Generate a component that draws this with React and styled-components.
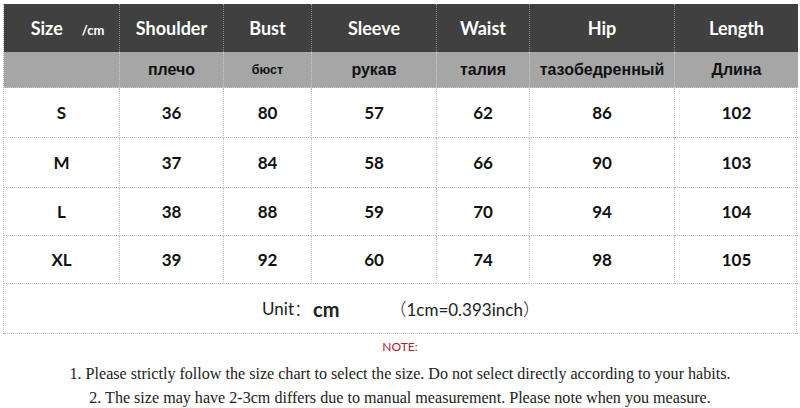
import React from "react";
import styled, { createGlobalStyle } from "styled-components";

const Global = createGlobalStyle`
  html, body { margin: 0; padding: 0; background: #fff; }
  body { width: 800px; height: 408px; overflow: hidden; }
`;

const Page = styled.div`
  padding: 4px 3px 0 3px;
  width: 800px;
  box-sizing: border-box;
`;

const Table = styled.div`
  display: grid;
  grid-template-columns: 115px 104px 88px 125px 93px 145px 124px;
  grid-template-rows: 48px 36px 50px 50px 48px 48px 50px;
  width: 794px;
  border-left: 1px dotted #bdbdbd;
  border-right: 1px dotted #bdbdbd;
  box-sizing: border-box;
`;

const HeadCell = styled.div`
  background: #404040;
  color: #fff;
  font-family: Lato, "Liberation Sans", sans-serif;
  font-weight: 700;
  font-size: 18px;
  display: flex;
  align-items: center;
  justify-content: center;
  border-left: ${(p) => (p.$first ? "none" : "1px dotted #8a8a8a")};
  padding-left: ${(p) => (p.$first ? "12px" : "0")};
  box-sizing: border-box;
`;

const Small = styled.span`
  font-size: 13px;
  margin-left: 19px;
  margin-top: 3px;
`;

const SubCell = styled.div`
  background: #a6a6a6;
  color: #111;
  font-family: "Liberation Sans", Arial, sans-serif;
  font-weight: 700;
  font-size: ${(p) => (p.$small ? "12.5px" : "16px")};
  display: flex;
  align-items: center;
  justify-content: center;
  border-left: ${(p) => (p.$first ? "none" : "1px dotted #c8c8c8")};
  border-bottom: 1px dotted #c8c8c8;
  box-sizing: border-box;
`;

const Cell = styled.div`
  color: #111;
  font-family: Lato, "Liberation Sans", sans-serif;
  font-weight: 700;
  font-size: 17px;
  display: flex;
  align-items: center;
  justify-content: center;
  border-left: ${(p) => (p.$first ? "none" : "1px dotted #c4c4c4")};
  border-bottom: 1px dotted #b8b8b8;
  box-sizing: border-box;
`;

const UnitRow = styled.div`
  grid-column: 1 / -1;
  display: flex;
  align-items: center;
  justify-content: center;
  font-family: Lato, "Liberation Sans", sans-serif;
  font-size: 17px;
  color: #222;
  border-bottom: 1px dotted #b8b8b8;
  box-sizing: border-box;
`;

const UnitBold = styled.span`
  font-weight: 700;
  font-size: 20px;
  margin-left: 2px;
`;

const Paren = styled.span`
  font-family: "Noto Sans CJK SC", sans-serif;
  font-weight: 300;
`;

const Conv = styled.span`
  margin-left: 50px;
`;

const Notes = styled.div`
  display: flex;
  flex-direction: column;
  align-items: center;
  padding-top: 6px;
`;

const NoteTitle = styled.div`
  color: #b8202e;
  font-family: Lato, "Liberation Sans", sans-serif;
  font-size: 12px;
  line-height: 14px;
  margin-bottom: 8px;
`;

const NoteLine = styled.div`
  font-family: "Liberation Serif", "Times New Roman", serif;
  font-size: 16.1px;
  line-height: 24px;
  color: #222;
  text-align: center;
  white-space: nowrap;
`;

const cols = ["Shoulder", "Bust", "Sleeve", "Waist", "Hip", "Length"];
const sub = [
  { t: "плечо" },
  { t: "бюст", small: true },
  { t: "рукав" },
  { t: "талия" },
  { t: "тазобедренный" },
  { t: "Длина" },
];
const rows = [
  ["S", 36, 80, 57, 62, 86, 102],
  ["M", 37, 84, 58, 66, 90, 103],
  ["L", 38, 88, 59, 70, 94, 104],
  ["XL", 39, 92, 60, 74, 98, 105],
];

export default function App() {
  return (
    <>
      <Global />
      <Page>
        <Table>
          <HeadCell $first>
            Size<Small>/cm</Small>
          </HeadCell>
          {cols.map((c) => (
            <HeadCell key={c}>{c}</HeadCell>
          ))}
          <SubCell $first />
          {sub.map((s) => (
            <SubCell key={s.t} $small={s.small}>
              {s.t}
            </SubCell>
          ))}
          {rows.map((r) =>
            r.map((v, i) => (
              <Cell key={r[0] + i} $first={i === 0}>
                {v}
              </Cell>
            ))
          )}
          <UnitRow>
            Unit<Paren>：</Paren>
            <UnitBold>cm</UnitBold>
            <Conv>
              <Paren>（</Paren>1cm=0.393inch<Paren>）</Paren>
            </Conv>
          </UnitRow>
        </Table>
        <Notes>
          <NoteTitle>NOTE:</NoteTitle>
          <NoteLine>
            1. Please strictly follow the size chart to select the size. Do not select directly according to your habits.
          </NoteLine>
          <NoteLine>
            2. The size may have 2-3cm differs due to manual measurement. Please note when you measure.
          </NoteLine>
        </Notes>
      </Page>
    </>
  );
}
